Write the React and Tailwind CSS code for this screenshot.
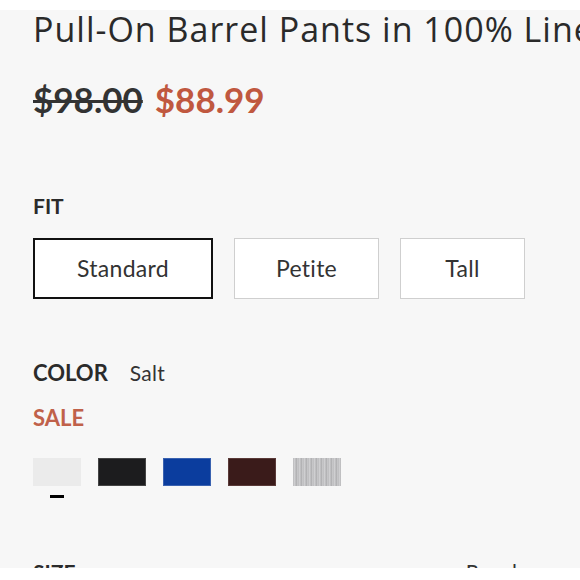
import React from "react";

const fits = [
    { name: "Standard", w: "w-[180px]", active: true },
    { name: "Petite", w: "w-[145px]" },
    { name: "Tall", w: "w-[125px]" },
];

const swatches = [
    { name: "Salt", cls: "bg-[#ebebeb]", active: true },
    { name: "Black", cls: "bg-[#1c1c1e] border border-[#444]" },
    { name: "Blue", cls: "bg-[#0b3d9e] border border-[#3a62b0]" },
    { name: "Brown", cls: "bg-[#3a1b1a] border border-[#5a3a38]" },
    { name: "Heather", cls: "bg-[repeating-linear-gradient(90deg,#b9b9bb_0px,#d6d6d8_2px,#a9a9ab_3px,#cfcfd1_5px)]" },
];

export default function App() {
    return (
        <div className="w-[580px] h-[580px] overflow-hidden bg-white flex flex-col font-['Lato','Open_Sans',sans-serif] text-[#2b2b2b]">
            <div className="h-[10px] shrink-0 bg-white" />
            <div className="h-[558px] shrink-0 overflow-hidden bg-[#f7f7f7] pl-[33px]">
                <h1 className="font-['Open_Sans',sans-serif] text-[34px] leading-[40px] tracking-[1px] whitespace-nowrap text-[#2a2a2a] mt-[-1px]">
                    Pull-On Barrel Pants in 100% Linen
                </h1>

                <div className="flex items-baseline gap-[12px] mt-[30px] text-[35px] leading-[40px] font-bold">
                    <span className="line-through text-[#333]">$98.00</span>
                    <span className="text-[#c0583f]">$88.99</span>
                </div>

                {/* fit */}
                <p className="mt-[75px] text-[21px] leading-[24px] font-bold">FIT</p>
                <div className="flex gap-[21px] mt-[20px]">
                    {fits.map(f => (
                        <button
                            key={f.name}
                            className={`${f.w} h-[61px] bg-white text-[23px] tracking-[0.3px] text-[#333] ${f.active ? "border-2 border-[#111]" : "border border-[#cfcfcf]"}`}
                        >
                            {f.name}
                        </button>
                    ))}
                </div>

                {/* color */}
                <div className="flex items-baseline gap-[22px] mt-[62px]">
                    <span className="text-[22px] leading-[24px] font-bold">COLOR</span>
                    <span className="text-[21px] leading-[24px] tracking-[0.3px] text-[#333]">Salt</span>
                </div>
                <p className="mt-[21px] text-[22px] leading-[24px] font-bold text-[#c0614a]">SALE</p>
                <div className="flex gap-[17px] mt-[28px]">
                    {swatches.map(s => (
                        <div key={s.name} className="flex flex-col w-[48px]">
                            <div className={`h-[28px] ${s.cls}`} />
                            {s.active && <div className="w-[14px] h-[3px] bg-black mx-auto mt-[9px]" />}
                        </div>
                    ))}
                </div>

                <div className="flex justify-between items-baseline pr-[45px] mt-[62px] text-[21px] leading-[24px]">
                    <span className="font-bold">SIZE</span>
                    <span className="text-[#333]">Regular</span>
                </div>
            </div>
            <div className="flex-1 bg-white" />
        </div>
    );
}
